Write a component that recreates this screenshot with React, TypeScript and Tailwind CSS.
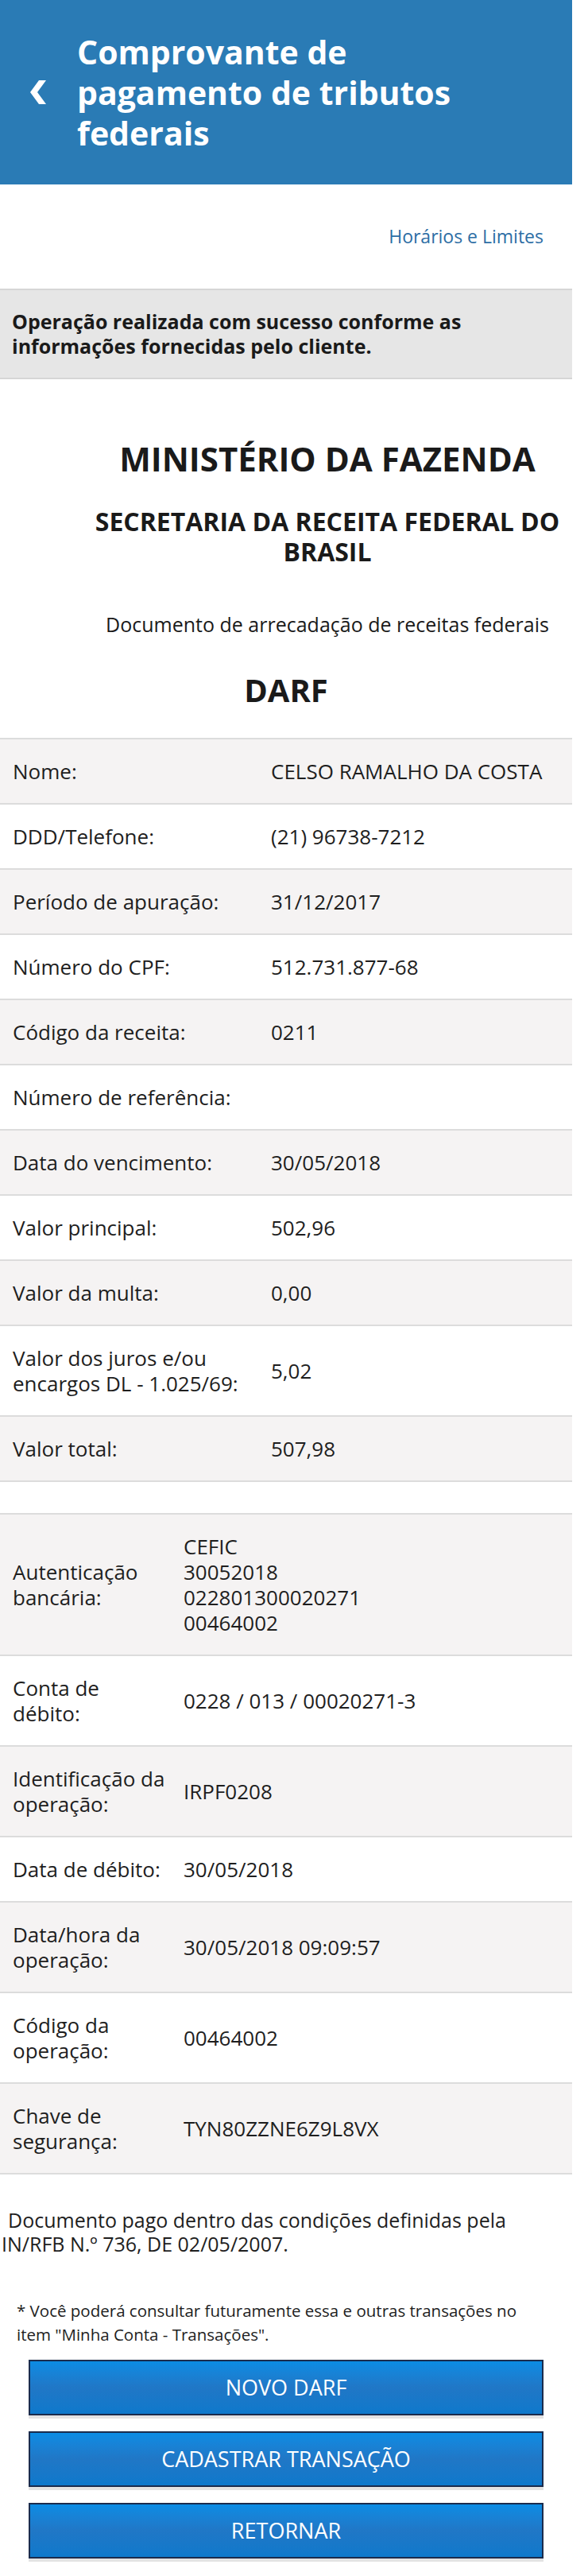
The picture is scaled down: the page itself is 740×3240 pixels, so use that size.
type Row = {
  label: string[];
  value: string[];
  shaded: boolean;
};

const darfRows: Row[] = [
  { label: ['Nome:'], value: ['CELSO RAMALHO DA COSTA'], shaded: true },
  { label: ['DDD/Telefone:'], value: ['(21) 96738-7212'], shaded: false },
  { label: ['Período de apuração:'], value: ['31/12/2017'], shaded: true },
  { label: ['Número do CPF:'], value: ['512.731.877-68'], shaded: false },
  { label: ['Código da receita:'], value: ['0211'], shaded: true },
  { label: ['Número de referência:'], value: [''], shaded: false },
  { label: ['Data do vencimento:'], value: ['30/05/2018'], shaded: true },
  { label: ['Valor principal:'], value: ['502,96'], shaded: false },
  { label: ['Valor da multa:'], value: ['0,00'], shaded: true },
  { label: ['Valor dos juros e/ou', 'encargos DL - 1.025/69:'], value: ['5,02'], shaded: false },
  { label: ['Valor total:'], value: ['507,98'], shaded: true },
];

const bankRows: Row[] = [
  {
    label: ['Autenticação', 'bancária:'],
    value: ['CEFIC', '30052018', '022801300020271', '00464002'],
    shaded: true,
  },
  { label: ['Conta de', 'débito:'], value: ['0228 / 013 / 00020271-3'], shaded: false },
  { label: ['Identificação da', 'operação:'], value: ['IRPF0208'], shaded: true },
  { label: ['Data de débito:'], value: ['30/05/2018'], shaded: false },
  { label: ['Data/hora da', 'operação:'], value: ['30/05/2018 09:09:57'], shaded: true },
  { label: ['Código da', 'operação:'], value: ['00464002'], shaded: false },
  { label: ['Chave de', 'segurança:'], value: ['TYN80ZZNE6Z9L8VX'], shaded: true },
];

function Lines({ lines }: { lines: string[] }) {
  return (
    <div>
      {lines.map((line, i) => (
        <div key={i} className="min-h-[32px] whitespace-nowrap">
          {line}
        </div>
      ))}
    </div>
  );
}

function InfoTable({ rows, labelWidth }: { rows: Row[]; labelWidth: string }) {
  return (
    <div className="border-t-2 border-[#dcdcdc]">
      {rows.map((row, i) => (
        <div
          key={i}
          className={`flex items-center border-b-2 border-[#dcdcdc] px-4 py-6 text-[26px] leading-[32px] text-[#1e1e1e] ${
            row.shaded ? 'bg-[#f5f3f3]' : 'bg-white'
          }`}
        >
          <div className={`shrink-0 ${labelWidth}`}>
            <Lines lines={row.label} />
          </div>
          <Lines lines={row.value} />
        </div>
      ))}
    </div>
  );
}

function ActionButton({ children }: { children: string }) {
  return (
    <button className="flex h-[70px] w-full items-center justify-center border-2 border-[#1b2c4d] bg-gradient-to-b from-[#0a8ce4] via-[#2077c6] to-[#0d79cc] text-[27px] text-white shadow-[0_4px_0_#e3e3e3]">
      {children}
    </button>
  );
}

export default function App() {
  return (
    <div className="w-[720px] bg-white font-['Open_Sans',sans-serif] text-[#1e1e1e]">
      {/* header */}
      <header className="flex h-[232px] items-center bg-[#2a7bb5] pl-[36px] text-white">
        <svg width="22" height="30" viewBox="0 0 22 30" className="shrink-0">
          <path d="M13 0 L22 0 L11 15 L22 30 L13 30 L2 15 Z" fill="white" />
        </svg>
        <h1 className="ml-[39px] text-[41px] font-bold leading-[51px]">
          Comprovante de
          <br />
          pagamento de tributos
          <br />
          federais
        </h1>
      </header>

      <div className="flex h-[131px] items-center justify-end pr-[36px]">
        <a className="text-[23px] text-[#2d6ea5]">Horários e Limites</a>
      </div>

      <div className="border-y-2 border-[#d6d6d6] bg-[#e6e6e6] px-[15px] py-[24px] text-[25px] font-bold leading-[31px] text-[#1a1a1a]">
        Operação realizada com sucesso conforme as
        <br />
        informações fornecidas pelo cliente.
      </div>

      {/* document title */}
      <div className="ml-[104px] w-[616px] text-center text-[#1a1a1a]">
        <h2 className="mt-[74px] text-[42px] font-bold leading-[52px]">MINISTÉRIO DA FAZENDA</h2>
        <h3 className="mt-[34px] text-[32px] font-bold leading-[38px]">
          SECRETARIA DA RECEITA FEDERAL DO
          <br />
          BRASIL
        </h3>
        <p className="mt-[56px] text-[25px] leading-[32px]">Documento de arrecadação de receitas federais</p>
      </div>
      <h2 className="mt-[44px] text-center text-[40px] font-bold leading-[46px] text-[#1a1a1a]">DARF</h2>

      <div className="mt-[37px]">
        <InfoTable rows={darfRows} labelWidth="w-[325px]" />
      </div>

      <div className="mt-[39px]">
        <InfoTable rows={bankRows} labelWidth="w-[215px]" />
      </div>

      <p className="mt-[42px] pl-[2px] text-[25px] leading-[30px]">
        <span className="pl-[8px]">Documento pago dentro das condições definidas pela</span>
        <br />
        IN/RFB N.º 736, DE 02/05/2007.
      </p>

      <p className="mt-[54px] pl-[21px] text-[20.5px] leading-[30px]">
        * Você poderá consultar futuramente essa e outras transações no
        <br />
        item "Minha Conta - Transações".
      </p>

      <div className="mt-[17px] flex flex-col gap-5 px-[36px] pb-[20px]">
        <ActionButton>NOVO DARF</ActionButton>
        <ActionButton>CADASTRAR TRANSAÇÃO</ActionButton>
        <ActionButton>RETORNAR</ActionButton>
      </div>
    </div>
  );
}
